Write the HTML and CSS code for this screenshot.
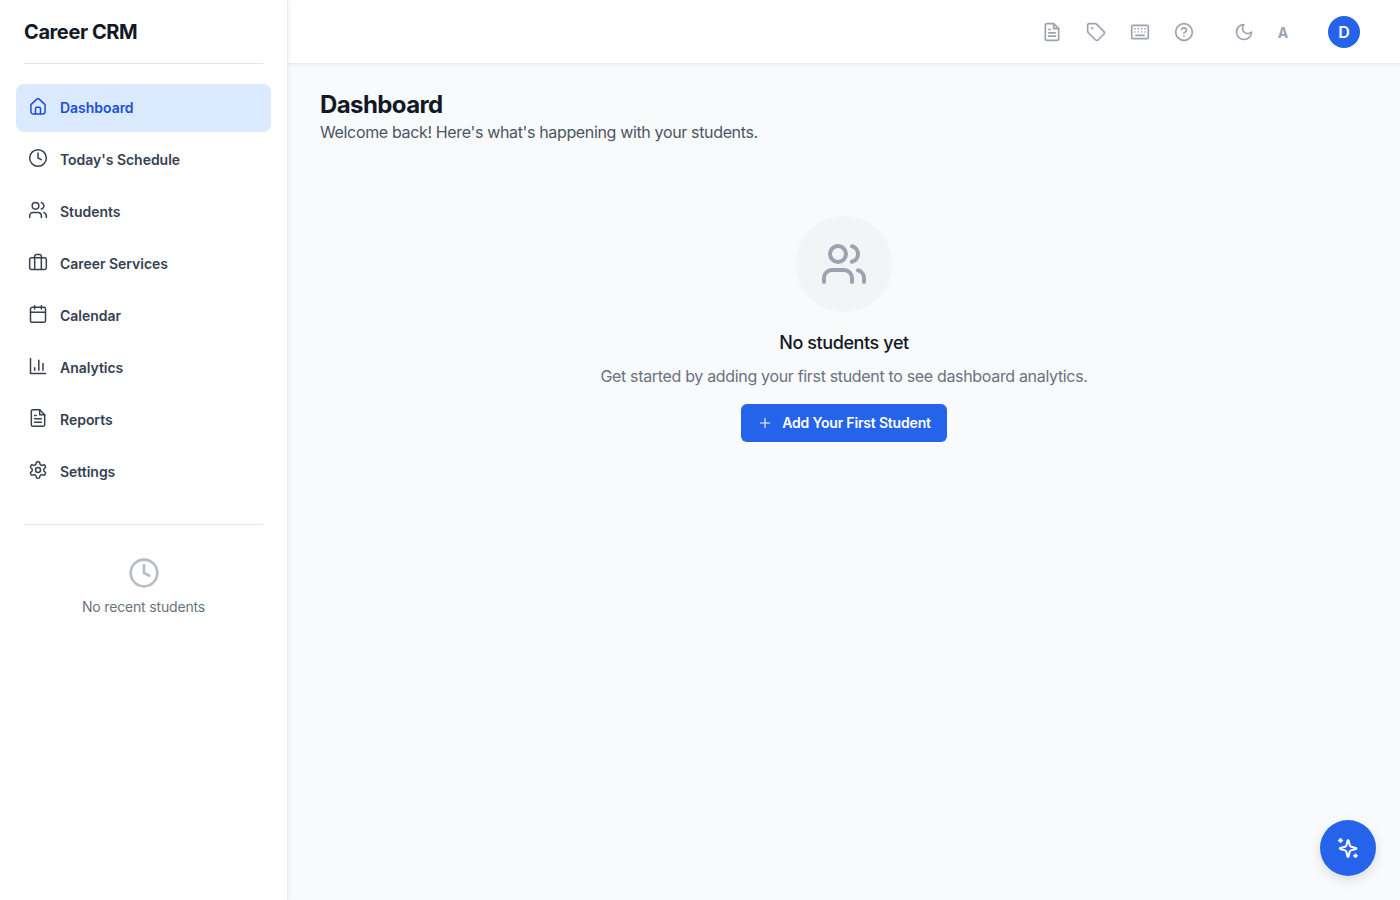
FILE: index.html
```html
<!DOCTYPE html>
<html lang="en">
  <head>
    <meta charset="UTF-8" />
    <title>Career CRM</title>
    <link rel="stylesheet" href="styles.css">
  </head>
  <body>
    <!-- Sidebar -->
    <aside class="sidebar">
      <div class="brand">Career CRM</div>
      <nav class="side-nav">
        <a class="nav-item active" href="#">
          <svg class="nav-icon" viewBox="0 0 24 24"><path d="M3.500 10.400 10.900 3.500a1.600 1.600 0 0 1 2.200 0l7.400 6.900V19a2.500 2.500 0 0 1-2.500 2.500H6A2.500 2.500 0 0 1 3.500 19Z" /><path d="M9 21.500V15a1.500 1.500 0 0 1 1.500-1.500h3A1.500 1.500 0 0 1 15 15v6.500" /></svg>
          Dashboard
        </a>
        <a class="nav-item" href="#">
          <svg class="nav-icon" viewBox="0 0 24 24"><circle cx="12" cy="12" r="10" /><path d="M12 6v6l4 2" /></svg>
          Today's Schedule
        </a>
        <a class="nav-item" href="#">
          <svg class="nav-icon" viewBox="0 0 24 24"><path d="M16 21v-2a4 4 0 0 0-4-4H6a4 4 0 0 0-4 4v2" /><circle cx="9" cy="7" r="4" /><path d="M16 3.130a4 4 0 0 1 0 7.750" /><path d="M22 21v-2a4 4 0 0 0-3-3.870" /></svg>
          Students
        </a>
        <a class="nav-item" href="#">
          <svg class="nav-icon" viewBox="0 0 24 24"><rect x="2" y="7" width="20" height="14" rx="2" /><path d="M16 21V5a2 2 0 0 0-2-2h-4a2 2 0 0 0-2 2v16" /></svg>
          Career Services
        </a>
        <a class="nav-item" href="#">
          <svg class="nav-icon" viewBox="0 0 24 24"><rect x="3" y="4" width="18" height="18" rx="2" /><path d="M16 2v4M8 2v4M3 10h18" /></svg>
          Calendar
        </a>
        <a class="nav-item" href="#">
          <svg class="nav-icon" viewBox="0 0 24 24"><path d="M3 3v18h18" /><path d="M18 17V9M13 17V5M8 17v-3" /></svg>
          Analytics
        </a>
        <a class="nav-item" href="#">
          <svg class="nav-icon" viewBox="0 0 24 24"><path d="M14 2H6a2 2 0 0 0-2 2v16a2 2 0 0 0 2 2h12a2 2 0 0 0 2-2V8z" /><path d="M14 2v6h6M16 13H8M16 17H8M10 9H8" /></svg>
          Reports
        </a>
        <a class="nav-item" href="#">
          <svg class="nav-icon" viewBox="0 0 24 24"><path d="M12.220 2h-.44a2 2 0 0 0-2 2v.18a2 2 0 0 1-1 1.730l-.43.25a2 2 0 0 1-2 0l-.15-.08a2 2 0 0 0-2.730.73l-.22.38a2 2 0 0 0 .73 2.730l.15.1a2 2 0 0 1 1 1.720v.51a2 2 0 0 1-1 1.740l-.15.09a2 2 0 0 0-.73 2.730l.22.38a2 2 0 0 0 2.730.73l.15-.08a2 2 0 0 1 2 0l.43.25a2 2 0 0 1 1 1.730V20a2 2 0 0 0 2 2h.44a2 2 0 0 0 2-2v-.18a2 2 0 0 1 1-1.730l.43-.25a2 2 0 0 1 2 0l.15.08a2 2 0 0 0 2.730-.73l.22-.39a2 2 0 0 0-.73-2.730l-.15-.08a2 2 0 0 1-1-1.740v-.5a2 2 0 0 1 1-1.740l.15-.09a2 2 0 0 0 .73-2.730l-.22-.38a2 2 0 0 0-2.730-.73l-.15.08a2 2 0 0 1-2 0l-.43-.25a2 2 0 0 1-1-1.730V4a2 2 0 0 0-2-2z" /><circle cx="12" cy="12" r="3" /></svg>
          Settings
        </a>
      </nav>
      <div class="recent">
        <svg class="recent-icon" viewBox="0 0 24 24"><circle cx="12" cy="12" r="10" /><path d="M12 6v6l4 2" /></svg>
        <p>No recent students</p>
      </div>
    </aside>

    <div class="page">
      <!-- Top bar -->
      <header class="topbar">
        <div class="tools">
          <svg class="tool-icon" viewBox="0 0 24 24"><path d="M14 2H6a2 2 0 0 0-2 2v16a2 2 0 0 0 2 2h12a2 2 0 0 0 2-2V8z" /><path d="M14 2v6h6M16 13H8M16 17H8M10 9H8" /></svg>
          <svg class="tool-icon" viewBox="0 0 24 24"><path d="M12.586 2.586A2 2 0 0 0 11.172 2H4a2 2 0 0 0-2 2v7.172a2 2 0 0 0 .586 1.414l8.704 8.704a2.426 2.426 0 0 0 3.420 0l6.580-6.580a2.426 2.426 0 0 0 0-3.420z" /><circle cx="7.500" cy="7.500" r=".5" /></svg>
          <svg class="tool-icon" viewBox="0 0 24 24"><rect x="2" y="4" width="20" height="16" rx="2" /><path d="M6 8h.01M10 8h.01M14 8h.01M18 8h.01M6 12h.01M10 12h.01M14 12h.01M18 12h.01M7 16h10" /></svg>
          <svg class="tool-icon" viewBox="0 0 24 24"><circle cx="12" cy="12" r="10" /><path d="M9.090 9a3 3 0 0 1 5.830 1c0 2-3 3-3 3" /><path d="M12 17h.01" /></svg>
        </div>
        <div class="prefs">
          <svg class="tool-icon" viewBox="0 0 24 24"><path d="M12 3a6 6 0 0 0 9 9 9 9 0 1 1-9-9Z" /></svg>
          <span class="lang">A</span>
        </div>
        <div class="avatar">D</div>
      </header>

      <!-- Main content -->
      <main class="content">
        <h1>Dashboard</h1>
        <p class="subtitle">Welcome back! Here's what's happening with your students.</p>

        <section class="empty">
          <div class="empty-circle">
            <svg class="empty-icon" viewBox="0 0 24 24"><path d="M16 21v-2a4 4 0 0 0-4-4H6a4 4 0 0 0-4 4v2" /><circle cx="9" cy="7" r="4" /><path d="M16 3.130a4 4 0 0 1 0 7.750" /><path d="M22 21v-2a4 4 0 0 0-3-3.870" /></svg>
          </div>
          <h2>No students yet</h2>
          <p>Get started by adding your first student to see dashboard analytics.</p>
          <button class="add-btn">
            <svg class="plus-icon" viewBox="0 0 24 24"><path d="M5 12h14M12 5v14" /></svg>
            Add Your First Student
          </button>
        </section>
      </main>
    </div>

    <!-- Floating assistant button -->
    <button class="fab">
      <svg class="fab-icon" viewBox="0 0 24 24"><path d="M10.200 15.400a2 2 0 0 0-1.400-1.400l-5.200-1.500a.5.5 0 0 1 0-1l5.200-1.400a2 2 0 0 0 1.400-1.400l1.400-5.200a.5.5 0 0 1 1 0l1.400 5.200a2 2 0 0 0 1.400 1.400l5.200 1.400a.5.5 0 0 1 0 1L15.200 14a2 2 0 0 0-1.400 1.400l-1.400 5.200a.5.5 0 0 1-1 0z" transform="translate(1 1.500) scale(.92)" /><path d="M4.500 3v3M3 4.500h3M19.500 18.500v2.500M18.250 19.750h2.500" /></svg>
    </button>
  </body>
</html>
```

FILE: styles.css
```css
/* Basic Reset */
* {
  margin: 0;
  padding: 0;
  box-sizing: border-box;
}

body {
  display: flex;
  height: 900px;
  overflow: hidden;
  font-family: Inter, "Liberation Sans", sans-serif;
  background-color: #f9fafb;
  color: #111827;
}

svg {
  fill: none;
  stroke: currentColor;
  stroke-width: 2;
  stroke-linecap: round;
  stroke-linejoin: round;
  flex-shrink: 0;
}

/* Sidebar */
.sidebar {
  width: 288px;
  flex-shrink: 0;
  padding: 0 16px;
  background-color: #fff;
  border-right: 1px solid #e9ebee;
  box-shadow: 2px 0 4px rgba(0, 0, 0, 0.04);
  z-index: 2;
}

.brand {
  height: 64px;
  margin: 0 8px;
  font-size: 20px;
  line-height: 64px;
  font-weight: 700;
  letter-spacing: -0.4px;
  border-bottom: 1px solid #e5e7eb;
}

.side-nav {
  display: flex;
  flex-direction: column;
  gap: 4px;
  padding: 20px 0;
  margin-bottom: 8px;
}

.nav-item {
  display: flex;
  align-items: center;
  gap: 12px;
  height: 48px;
  padding: 0 12px 2px;
  border-radius: 8px;
  font-size: 14px;
  font-weight: 600;
  letter-spacing: -0.03px;
  color: #374151;
  text-decoration: none;
}

.nav-item.active {
  background-color: #dbeafe;
  color: #1d4ed8;
}

.nav-icon {
  width: 20px;
  height: 20px;
  margin-top: -2px;
  stroke-width: 1.8;
}

.recent {
  margin: 0 8px;
  padding-top: 32px;
  border-top: 1px solid #e5e7eb;
  text-align: center;
}

.recent-icon {
  display: block;
  width: 32px;
  height: 32px;
  margin: 0 auto 8px;
  color: #b8bcc4;
}

.recent p {
  font-size: 14px;
  line-height: 20px;
  letter-spacing: -0.17px;
  color: #6b7280;
}

/* Page area */
.page {
  flex: 1;
  min-width: 0;
}

.topbar {
  display: flex;
  align-items: center;
  justify-content: flex-end;
  height: 64px;
  padding-right: 40px;
  background-color: #fff;
  border-bottom: 1px solid #e9ebee;
  box-shadow: 0 1px 3px rgba(0, 0, 0, 0.05);
  color: #9ca3af;
}

.tools {
  display: flex;
  gap: 24px;
  margin-right: 40px;
}

.tool-icon {
  width: 20px;
  height: 20px;
}

.prefs {
  display: flex;
  align-items: center;
  gap: 21px;
  margin-right: 37px;
}

.lang {
  width: 16px;
  font-size: 14px;
  font-weight: 700;
  text-align: center;
  margin-top: 2px;
}

.avatar {
  display: flex;
  align-items: center;
  justify-content: center;
  width: 32px;
  height: 32px;
  border-radius: 50%;
  background-color: #2563eb;
  color: #fff;
  font-size: 16px;
  font-weight: 600;
}

/* Main content */
.content {
  padding: 25px 32px 24px;
}

h1 {
  font-size: 24px;
  line-height: 32px;
  font-weight: 700;
  letter-spacing: -0.6px;
}

.subtitle {
  font-size: 16px;
  line-height: 22px;
  letter-spacing: -0.35px;
  color: #4b5563;
}

.empty {
  display: flex;
  flex-direction: column;
  align-items: center;
  padding-top: 73px;
}

.empty-circle {
  display: flex;
  align-items: center;
  justify-content: center;
  width: 96px;
  height: 96px;
  margin-bottom: 17px;
  border-radius: 50%;
  background-color: #f3f4f6;
}

.empty-icon {
  width: 48px;
  height: 48px;
  color: #9ca3af;
}

.empty h2 {
  font-size: 18px;
  line-height: 28px;
  font-weight: 500;
  letter-spacing: -0.4px;
  margin-bottom: 7px;
}

.empty p {
  font-size: 16px;
  line-height: 24px;
  letter-spacing: -0.33px;
  color: #6b7280;
  margin-bottom: 16px;
}

.add-btn {
  display: flex;
  align-items: center;
  gap: 9px;
  height: 38px;
  padding: 0 16px 1px;
  border: none;
  border-radius: 6px;
  background-color: #2563eb;
  color: #fff;
  font-family: inherit;
  font-size: 14px;
  font-weight: 600;
  letter-spacing: -0.18px;
}

.plus-icon {
  width: 16px;
  height: 16px;
  stroke-width: 1.6;
}

/* Floating button */
.fab {
  position: fixed;
  right: 24px;
  bottom: 24px;
  display: flex;
  align-items: center;
  justify-content: center;
  width: 56px;
  height: 56px;
  border: none;
  border-radius: 50%;
  background-color: #2563eb;
  color: #fff;
  box-shadow: 0 4px 12px rgba(0, 0, 0, 0.12);
}

.fab-icon {
  width: 24px;
  height: 24px;
  stroke-width: 2.2;
}
```
